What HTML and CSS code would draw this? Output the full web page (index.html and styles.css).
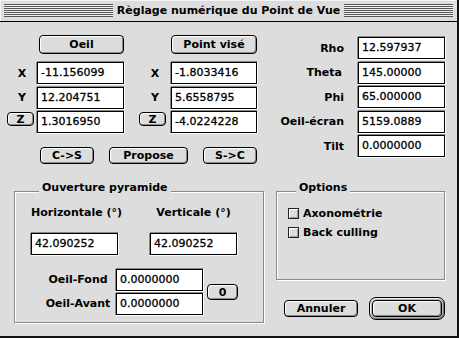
FILE: index.html
```html
<!DOCTYPE html>
<html lang="fr">
<head>
  <meta charset="UTF-8" />
  <title>Règlage numérique du Point de Vue</title>
  <link rel="stylesheet" href="styles.css">
</head>
<body>
  <div class="window">
    <div class="titlebar">
      <span class="stripes"></span>
      <span class="title">Règlage numérique du Point de Vue</span>
      <span class="stripes"></span>
    </div>

    <div class="content">
      <div class="top">
        <!-- eye / target coordinates -->
        <div class="coords">
          <span></span><button class="btn btn-head btn-eye">Oeil</button>
          <span></span>
          <span></span><button class="btn btn-head btn-target">Point visé</button>

          <span class="axis">X</span><div class="field">-11.156099</div>
          <span></span>
          <span class="axis">X</span><div class="field">-1.8033416</div>

          <span class="axis">Y</span><div class="field">12.204751</div>
          <span></span>
          <span class="axis">Y</span><div class="field">5.6558795</div>

          <button class="btn btn-z">Z</button><div class="field">1.3016950</div>
          <span></span>
          <button class="btn btn-z">Z</button><div class="field">-4.0224228</div>

          <div class="actions">
            <button class="btn btn-action">C->S</button>
            <button class="btn btn-propose">Propose</button>
            <button class="btn btn-action">S->C</button>
          </div>
        </div>

        <!-- spherical parameters -->
        <div class="sphere">
          <span class="label">Rho</span><div class="field">12.597937</div>
          <span class="label label-theta">Theta</span><div class="field">145.00000</div>
          <span class="label">Phi</span><div class="field">65.000000</div>
          <span class="label">Oeil-écran</span><div class="field">5159.0889</div>
          <span class="label">Tilt</span><div class="field">0.0000000</div>
        </div>
      </div>

      <div class="bottom">
        <div class="group pyramide">
          <div class="group-title">Ouverture pyramide</div>
          <div class="angles">
            <div class="angle">
              <span class="angle-label">Horizontale (°)</span>
              <div class="field">42.090252</div>
            </div>
            <div class="angle">
              <span class="angle-label">Verticale (°)</span>
              <div class="field">42.090252</div>
            </div>
          </div>
          <div class="depth">
            <div class="depth-labels">
              <span>Oeil-Fond</span>
              <span>Oeil-Avant</span>
            </div>
            <div class="depth-fields">
              <div class="field">0.0000000</div>
              <div class="field">0.0000000</div>
            </div>
            <button class="btn btn-zero">0</button>
          </div>
        </div>

        <div class="side">
          <div class="group options">
            <div class="group-title">Options</div>
            <div class="checks">
              <label class="check"><span class="box"></span>Axonométrie</label>
              <label class="check"><span class="box"></span>Back culling</label>
            </div>
          </div>
          <div class="dialog-buttons">
            <button class="btn btn-cancel">Annuler</button>
            <span class="default-ring"><button class="btn btn-ok">OK</button></span>
          </div>
        </div>
      </div>
    </div>
  </div>
</body>
</html>
```

FILE: styles.css
```css
body { margin: 0; background: #dddddd; font-family: "DejaVu Sans", sans-serif; font-size: 11px; font-weight: bold; color: #000; }

.window { box-sizing: border-box; width: 459px; height: 338px; background: #dddddd; border-right: 2px solid #111; border-bottom: 2px solid #111; }

/* title bar */
.titlebar { display: flex; align-items: center; height: 21px; padding: 0 4px; border-bottom: 1px solid #000; box-shadow: inset 1px 1px 0 #f4f4f4; }
.stripes { flex: 1; height: 13px; background: repeating-linear-gradient(to bottom, #555 0 1px, #f0f0f0 1px 2px); }
.title { padding: 0 4px; line-height: 21px; white-space: nowrap; }

.content { padding: 13px 12px 0 7px; }

/* generic controls */
.btn { box-sizing: border-box; padding: 0; font: inherit; color: #000; background: #dddddd; border: 1px solid #000; border-radius: 4px; box-shadow: inset 1px 1px 0 #fff, inset -1px -1px 0 #8a8a8a; line-height: 1; }
.field { box-sizing: border-box; height: 22px; padding-left: 3px; line-height: 20px; background: #fff; border: 1px solid #000; box-shadow: 0 -1px 0 #888, -1px 0 0 #888, 0 1px 0 #fff, 1px 0 0 #fff; font-weight: normal; -webkit-text-stroke: 0.3px #000; white-space: nowrap; }

/* top area */
.top { display: flex; align-items: flex-start; }
.coords { display: grid; grid-template-columns: 30px 87px 15px 32px 86px; grid-template-rows: 24.5px 22px 22px 22px auto; row-gap: 2.5px; }
.btn-head { align-self: start; height: 19px; }
.btn-eye { width: 85px; margin-left: 2px; }
.btn-target { width: 86px; }
.axis { align-self: center; text-align: center; }
.btn-z { align-self: start; width: 27px; height: 14px; margin-top: 1px; }
.actions { grid-column: 1 / -1; display: flex; gap: 15px; margin: 11.5px 0 0 33px; }
.btn-action { width: 54px; height: 17px; }
.btn-propose { width: 79px; height: 17px; }

.sphere { display: grid; grid-template-columns: auto 87px; grid-auto-rows: 22px; column-gap: 14px; row-gap: 2.5px; margin: 2px 0 0 auto; }
.sphere .label { align-self: center; justify-self: end; }
.sphere .label-theta { margin-right: 2px; }

/* groups */
.bottom { display: flex; align-items: flex-start; gap: 12px; margin-top: 27px; }
.group { box-sizing: border-box; border: 1px solid #888; box-shadow: inset 1px 1px 0 #fff, 1px 1px 0 #fff; }
.group-title { display: table; margin: -10px 0 0 8px; padding: 0 3px; line-height: 12px; background: #dddddd; }

.pyramide { width: 250px; margin-left: 7px; padding: 0 0 7px 16px; }
.angles { display: flex; gap: 32px; margin-top: 12px; }
.angle { width: 87px; }
.angle-label { display: block; line-height: 13px; text-align: center; white-space: nowrap; margin-bottom: 14px; }
.depth { display: flex; align-items: center; margin: 14px 0 0 11px; }
.depth-labels { display: flex; flex-direction: column; gap: 2px; width: 72px; margin-right: 2px; }
.depth-labels span { line-height: 22px; text-align: center; white-space: nowrap; }
.depth-fields { display: flex; flex-direction: column; gap: 2px; width: 87px; }
.btn-zero { width: 31px; height: 16px; margin-left: 4px; }

.side { width: 169px; }
.options { height: 89px; padding-left: 11px; }
.checks { margin-top: 10px; }
.check { display: flex; align-items: center; height: 19px; gap: 4px; }
.box { box-sizing: border-box; width: 11px; height: 11px; background: #dddddd; border: 1px solid #222; box-shadow: inset 1px 1px 0 #fff, inset -1px -1px 0 #999; }

.dialog-buttons { display: flex; align-items: center; margin-top: 17px; }
.btn-cancel { width: 74px; height: 17px; margin-left: 8px; }
.default-ring { box-sizing: border-box; display: flex; width: 76px; height: 23px; margin-left: 11px; padding: 2px; border: 1px solid #000; border-radius: 7px; background: #b8b8b8; box-shadow: inset 1px 1px 0 #eee, inset -1px -1px 0 #777; }
.btn-ok { flex: 1; height: 17px; }
```
